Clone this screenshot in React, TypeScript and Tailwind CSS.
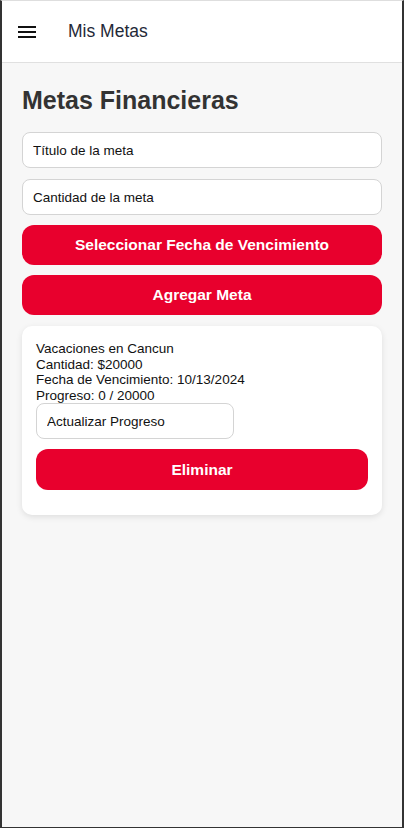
export default function App() {
  return (
    <div className="h-[828px] flex flex-col bg-[#f7f7f7] border-l-2 border-r-2 border-b border-[#333] border-t border-t-[#dedede] font-['Liberation_Sans',Arial,sans-serif] overflow-hidden">
      <header className="h-[62px] shrink-0 bg-white border-b border-[#e0e0e0] flex items-center">
        <button className="ml-[13px] w-[24px] h-[24px] flex items-center justify-center">
          <svg width="24" height="24" viewBox="0 0 24 24">
            <path d="M3 18h18v-2H3v2zm0-5h18v-2H3v2zm0-7v2h18V6H3z" fill="#111" />
          </svg>
        </button>
        <h1 className="ml-[29px] text-[17.5px] text-[#1f2937]">Mis Metas</h1>
      </header>

      <main className="px-5 pt-[21px]">
        <h2 className="text-[25px] font-bold text-[#333] leading-[32px]">Metas Financieras</h2>

        <div className="mt-[16px] flex flex-col gap-[11px]">
          <input
            placeholder="Título de la meta"
            className="h-[36px] w-full rounded-[8px] border border-[#d4d4d4] bg-white px-[10px] text-[13.5px] placeholder:text-[#111] outline-none"
          />
          <input
            placeholder="Cantidad de la meta"
            className="h-[36px] w-full rounded-[8px] border border-[#d4d4d4] bg-white px-[10px] text-[13.5px] placeholder:text-[#111] outline-none"
          />
        </div>

        <div className="mt-[10px] flex flex-col gap-[10px]">
          <button className="h-[40px] w-full rounded-[12px] bg-[#e8002d] text-white font-bold text-[15.5px]">
            Seleccionar Fecha de Vencimiento
          </button>
          <button className="h-[40px] w-full rounded-[12px] bg-[#e8002d] text-white font-bold text-[15.5px]">
            Agregar Meta
          </button>
        </div>

        <div className="mt-[11px] rounded-[10px] bg-white px-[14px] pt-[15px] pb-[25px] shadow-[0_2px_6px_rgba(0,0,0,0.1)]">
          <div className="text-[13.5px] leading-[15.5px] text-[#111]">
            <p>Vacaciones en Cancun</p>
            <p>Cantidad: $20000</p>
            <p>Fecha de Vencimiento: 10/13/2024</p>
            <p>Progreso: 0 / 20000</p>
          </div>
          <input
            placeholder="Actualizar Progreso"
            className="block h-[36px] w-[198px] rounded-[8px] border border-[#d4d4d4] bg-white px-[10px] text-[13.5px] placeholder:text-[#111] outline-none"
          />
          <button className="mt-[10px] h-[41px] w-full rounded-[12px] bg-[#e8002d] text-white font-bold text-[15.5px]">
            Eliminar
          </button>
        </div>
      </main>
    </div>
  );
}
